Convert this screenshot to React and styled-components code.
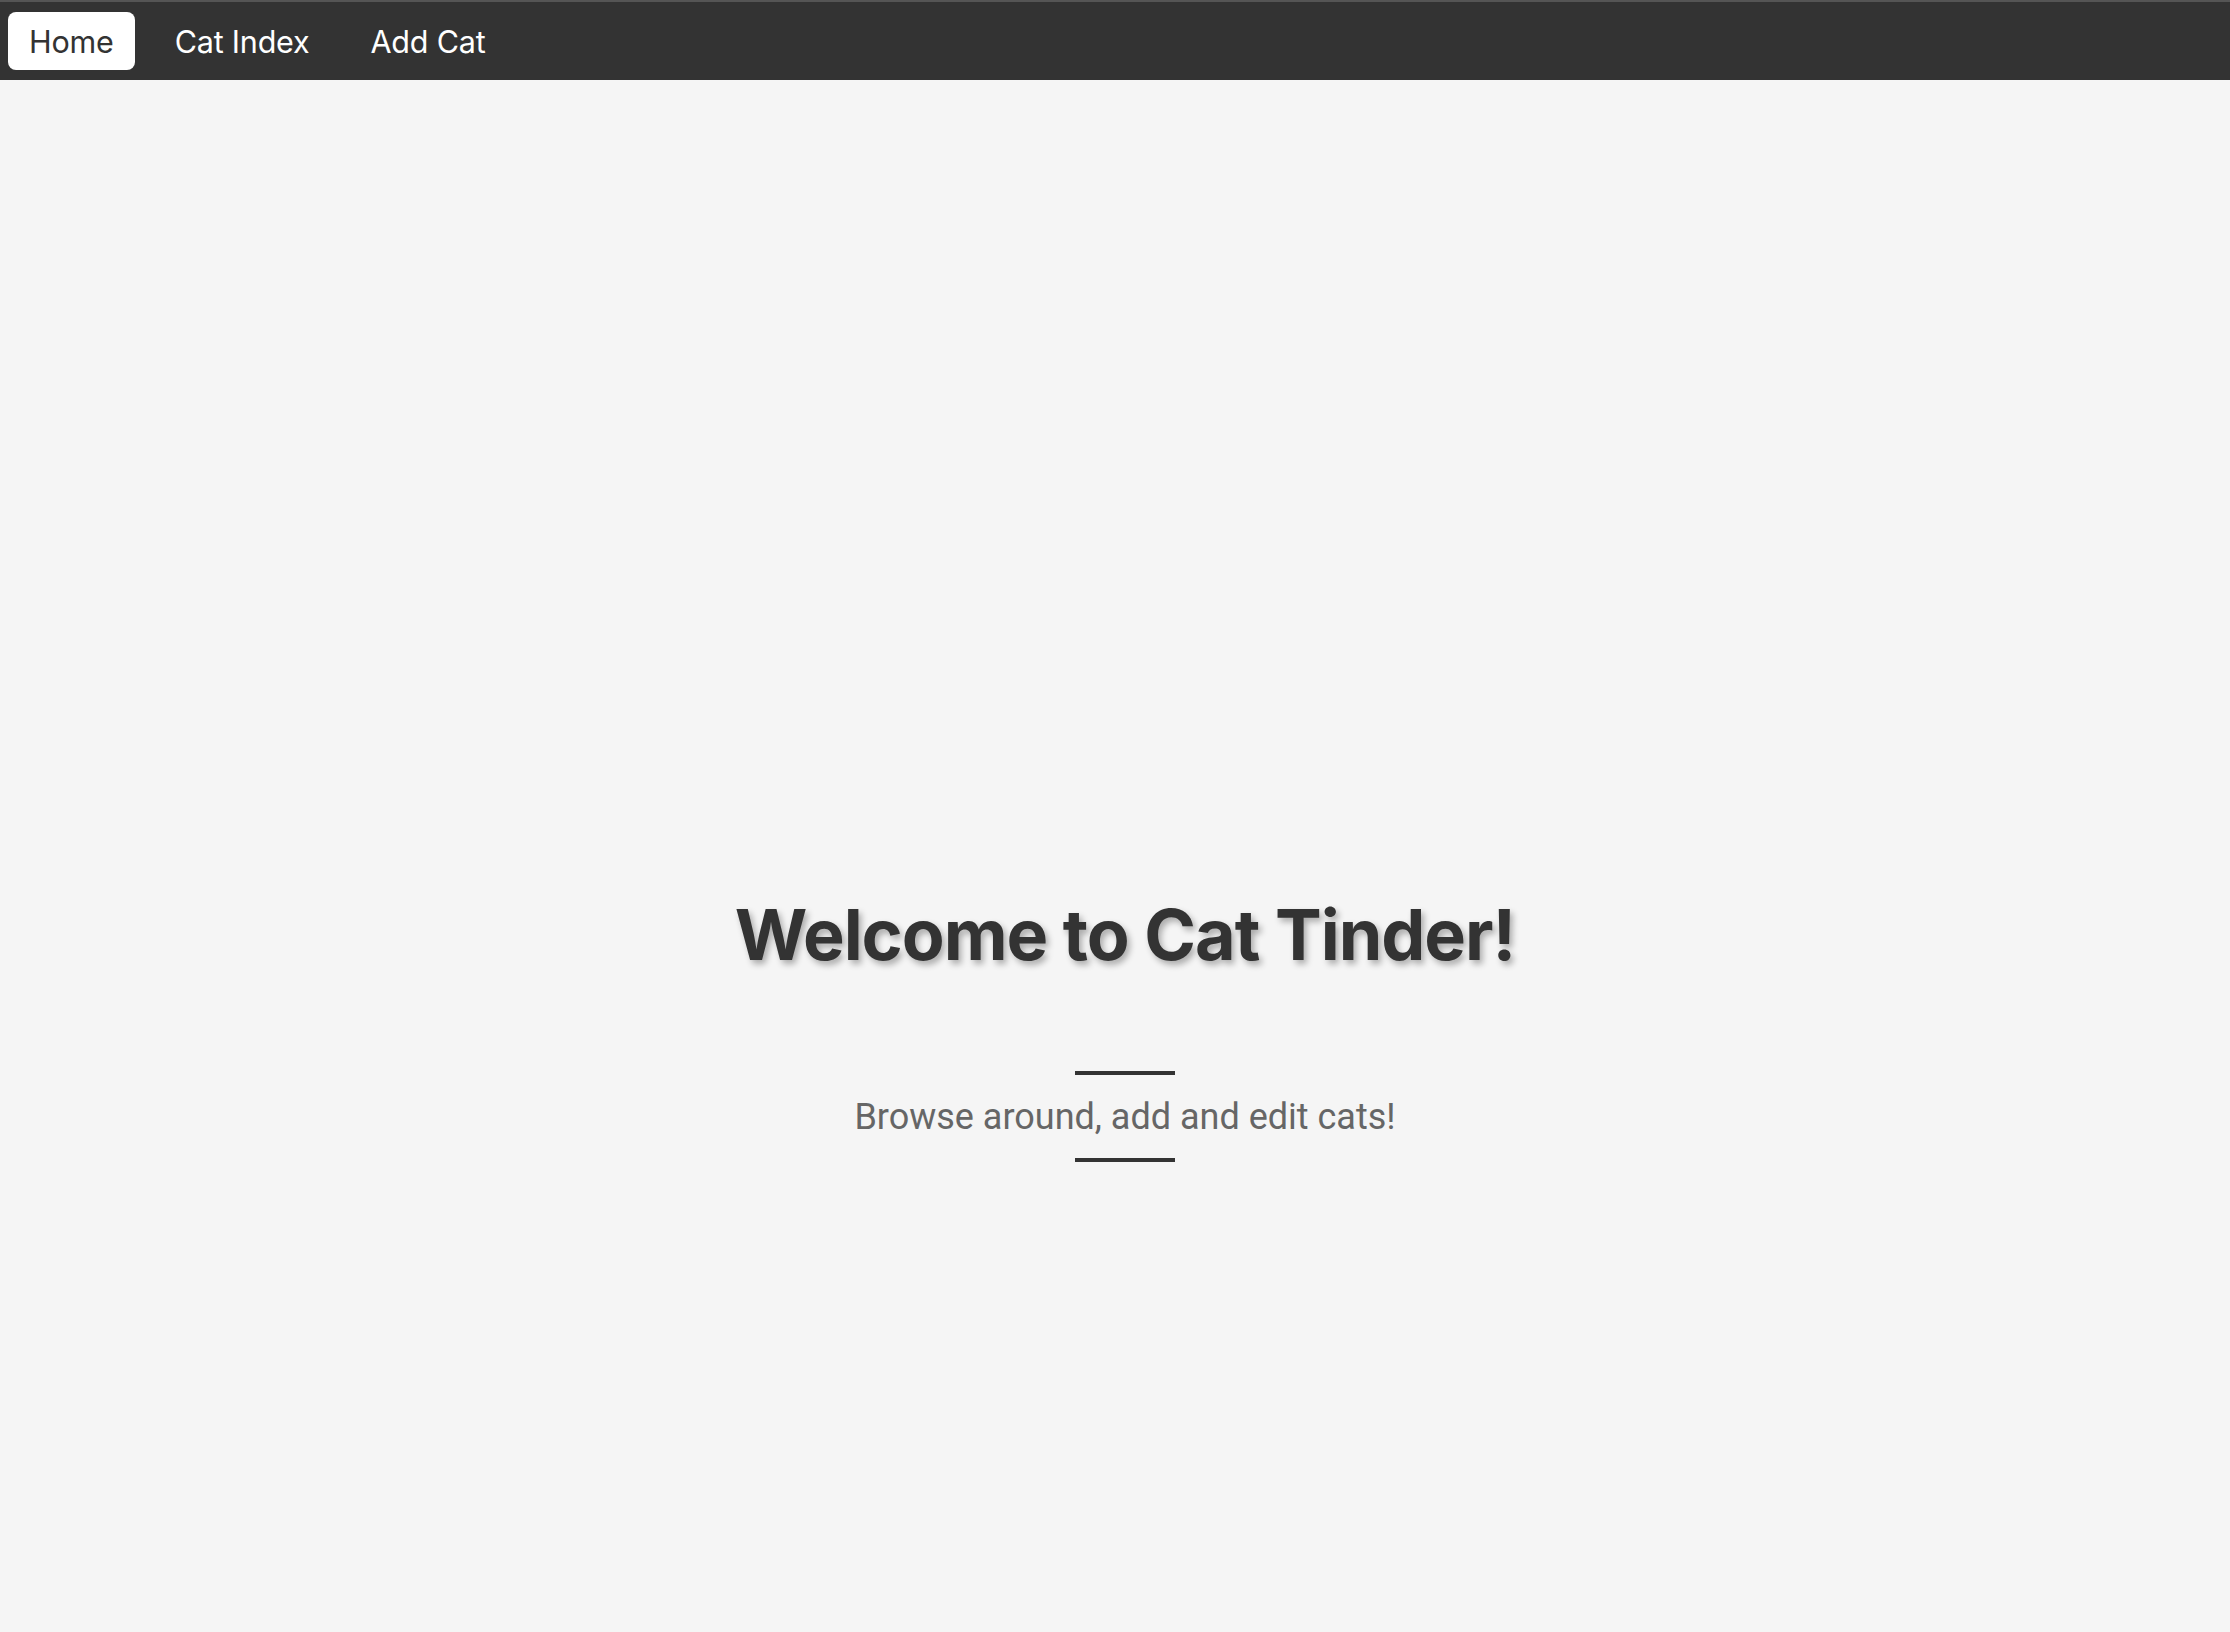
import React from 'react';
import styled, { createGlobalStyle } from 'styled-components';

const GlobalStyle = createGlobalStyle`
  html, body {
    margin: 0;
    padding: 0;
    background: #f5f5f5;
    font-family: Inter, "Noto Sans", sans-serif;
  }
`;

const links = ['Home', 'Cat Index', 'Add Cat'];

const App = () => {
  const active = 'Home';

  return (
    <>
      <GlobalStyle />
      <NavBar>
        {links.map((label) => (
          <NavLink key={label} $active={label === active}>{label}</NavLink>
        ))}
      </NavBar>
      <Main>
        <Title>Welcome to Cat Tinder!</Title>
        <Divider />
        <Subtitle>Browse around, add and edit cats!</Subtitle>
        <Divider />
      </Main>
    </>
  );
};

const NavBar = styled.nav`
  display: flex;
  align-items: center;
  gap: 19px;
  height: 78px;
  padding: 0 8px;
  background: #333333;
  border-top: 2px solid #555555;
`;

const NavLink = styled.a`
  display: flex;
  align-items: center;
  height: 58px;
  padding: 0 21px;
  border-radius: 8px;
  font-size: 30.5px;
  letter-spacing: -0.2px;
  cursor: pointer;
  background: ${({ $active }) => ($active ? '#ffffff' : 'transparent')};
  color: ${({ $active }) => ($active ? '#333333' : '#ffffff')};
`;

const Main = styled.main`
  display: flex;
  flex-direction: column;
  align-items: center;
  padding: 820px 0 0 20px;
`;

const Title = styled.h1`
  margin: 0 0 101px;
  font-size: 70px;
  line-height: 1;
  font-weight: 700;
  letter-spacing: -1px;
  color: #333333;
  text-shadow: 3px 4px 6px rgba(0, 0, 0, 0.3);
`;

const Divider = styled.div`
  width: 100px;
  height: 4px;
  background: #333333;
`;

const Subtitle = styled.p`
  margin: 24px 0 23px;
  font-family: Roboto, "Liberation Sans", sans-serif;
  font-size: 36px;
  line-height: 1;
  color: #666666;
`;

export default App;
